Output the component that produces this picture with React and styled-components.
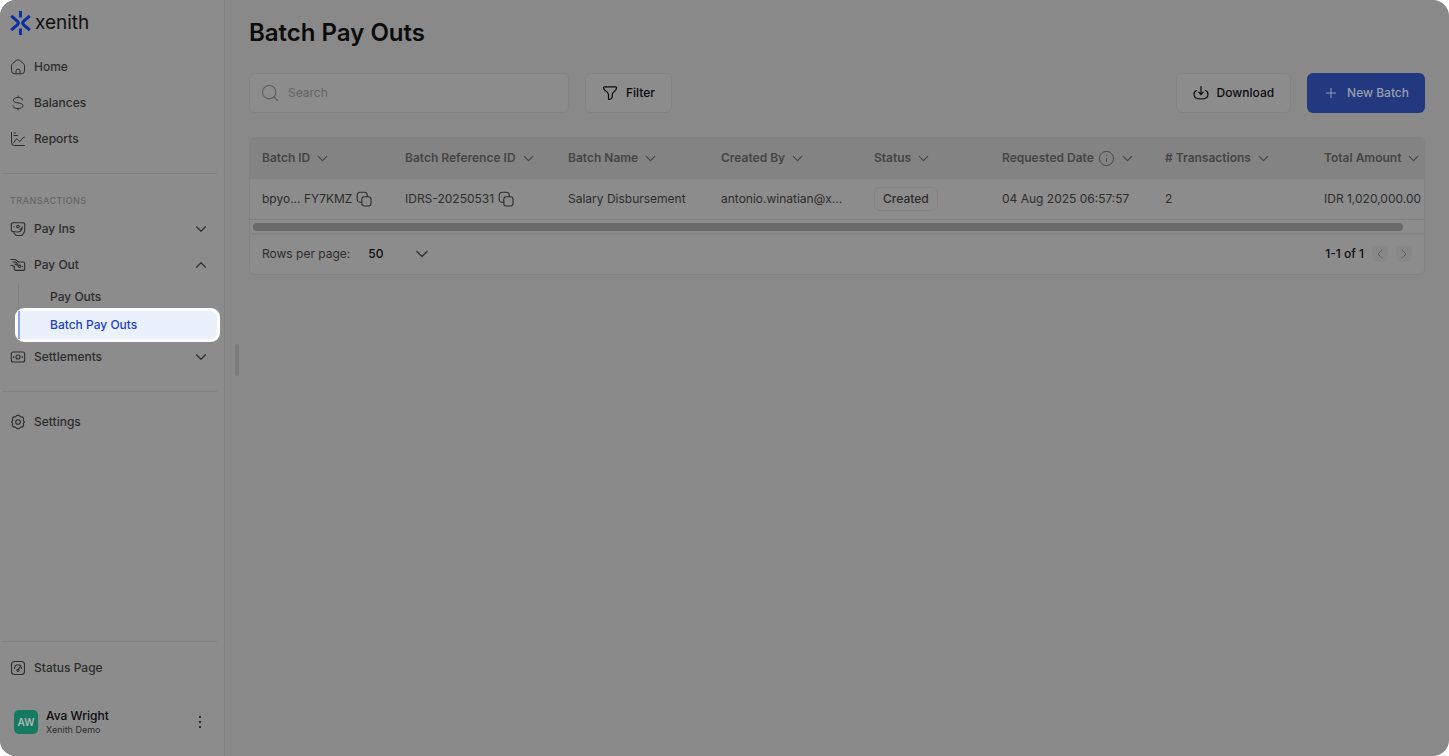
import React from "react"
import styled, { createGlobalStyle, ThemeProvider } from "styled-components"
import { ChevronDown, ChevronUp, ChevronLeft, ChevronRight, Search, Info, Plus } from "lucide-react"

const theme = {
  color: {
    surface: "#8c8c8c",
    page: "#898989",
    header: "#838383",
    border: "#838383",
    line: "#808080",
    text: "#2d2d2d",
    strong: "#0b0b0c",
    muted: "#454545",
    faint: "#666666",
    primary: "#22387f",
    active: "#1d3fc4",
  },
}

const GlobalStyle = createGlobalStyle`
  *, *::before, *::after {
    box-sizing: border-box;
  }
  body {
    margin: 0;
    background: #ffffff;
    font-family: Inter, "Liberation Sans", sans-serif;
    font-size: 12px;
    line-height: 20px;
    color: ${theme.color.text};
  }
  button, input, select {
    font: inherit;
    color: inherit;
  }
  a {
    color: inherit;
    text-decoration: none;
  }
  ul {
    margin: 0;
    padding: 0;
    list-style: none;
  }
`

const Shell = styled.div`
  display: flex;
  min-height: 100vh;
  border-radius: 16px;
  overflow: hidden;
  background: ${props => props.theme.color.page};
`

const Sidebar = styled.aside`
  display: flex;
  flex-direction: column;
  flex: 0 0 225px;
  padding: 9px 7px 20px 2px;
  border-right: 1px solid ${props => props.theme.color.line};
  background: ${props => props.theme.color.surface};
`

const Brand = styled.a`
  display: flex;
  align-items: center;
  gap: 4px;
  height: 28px;
  margin-bottom: 12px;
  padding-left: 8px;
  color: #111111;
  font-size: 19px;
`

const NavLink = styled.a`
  display: flex;
  align-items: center;
  gap: 8px;
  height: 36px;
  padding: 0 8px;
  font-weight: 500;
`

const NavToggle = styled.button`
  display: flex;
  align-items: center;
  gap: 8px;
  width: 100%;
  height: 36px;
  padding: 0 7px 0 8px;
  border: 0;
  background: none;
  font-weight: 500;
  text-align: left;
  cursor: pointer;

  & > span {
    flex: 1;
  }
`

const Divider = styled.hr`
  width: 100%;
  margin: ${props => props.$space || "16px 0"};
  border: 0;
  border-top: 1px solid ${props => props.theme.color.line};
`

const GroupTitle = styled.h2`
  margin: 0;
  padding: 1px 0 0 8px;
  color: ${props => props.theme.color.faint};
  font-size: 9px;
  font-weight: 500;
  letter-spacing: 0.05em;
`

const SubList = styled.ul`
  margin-left: 16px;
  border-left: 1px solid ${props => props.theme.color.line};
`

const SubItem = styled.li`
  margin-left: -1px;
  border-radius: ${props => (props.$active ? "6px" : "0")};
  background: ${props => (props.$active ? "#ffffff" : "none")};
  box-shadow: ${props => (props.$active ? "0 0 0 3px #ffffff" : "none")};
`

const SubLink = styled.a`
  display: flex;
  align-items: center;
  height: 28px;
  padding-left: ${props => (props.$active ? "30px" : "32px")};
  border-left: ${props => (props.$active ? "2px solid #8aa5f5" : "0")};
  border-radius: 0 6px 6px 0;
  background: ${props => (props.$active ? "#ebf0fd" : "none")};
  color: ${props => (props.$active ? props.theme.color.active : props.theme.color.text)};
  font-weight: 500;
`

const SidebarFooter = styled.div`
  margin-top: auto;
`

const Account = styled.div`
  display: flex;
  align-items: center;
  gap: 8px;
  margin-top: 22px;
  padding: 0 9px 0 12px;
`

const Avatar = styled.span`
  display: grid;
  place-items: center;
  width: 24px;
  height: 24px;
  border-radius: 5px;
  background: #147a62;
  color: #b5b5b5;
  font-size: 10px;
  font-weight: 600;
`

const AccountText = styled.div`
  flex: 1;
  color: ${props => props.theme.color.strong};
  font-weight: 500;
  line-height: 16px;

  & > small {
    display: block;
    color: ${props => props.theme.color.text};
    font-size: 9px;
    font-weight: 400;
    line-height: 12px;
  }
`

const IconButton = styled.button`
  display: grid;
  place-items: center;
  width: 16px;
  height: 16px;
  padding: 0;
  border: 0;
  border-radius: 5px;
  background: ${props => props.$fill || "none"};
  color: ${props => props.$color || "inherit"};
  cursor: pointer;
`

const Resizer = styled.div`
  align-self: center;
  flex: 0 0 4px;
  height: 32px;
  margin: 0 10px 36px;
  border-radius: 2px;
  background: #7c7c7c;
`

const Main = styled.main`
  flex: 1;
  min-width: 0;
  padding: 17px 24px 24px 0;
`

const Title = styled.h1`
  margin: 0 0 24px;
  color: ${props => props.theme.color.strong};
  font-size: 24px;
  font-weight: 600;
  line-height: 32px;
`

const Toolbar = styled.div`
  display: flex;
  gap: 16px;
  margin-bottom: 24px;
`

const SearchBox = styled.label`
  display: flex;
  align-items: center;
  gap: 8px;
  width: 320px;
  height: 40px;
  padding: 0 10px;
  border: 1px solid ${props => props.theme.color.border};
  border-radius: 6px;
  background: ${props => props.theme.color.surface};
  color: #5c5c5c;
`

const SearchInput = styled.input`
  flex: 1;
  min-width: 0;
  padding: 0;
  border: 0;
  outline: 0;
  background: none;

  &::placeholder {
    color: #646464;
    opacity: 1;
  }
`

const Button = styled.button`
  display: flex;
  align-items: center;
  justify-content: center;
  gap: 8px;
  height: 40px;
  padding: 0 16px;
  border: ${props => (props.$primary ? "0" : `1px solid ${props.theme.color.border}`)};
  border-radius: 6px;
  background: ${props => (props.$primary ? props.theme.color.primary : props.theme.color.surface)};
  color: ${props => (props.$primary ? "#989eae" : props.theme.color.strong)};
  font-weight: 500;
  cursor: pointer;
`

const Spacer = styled.div`
  flex: 1;
`

const Card = styled.section`
  border: 1px solid ${props => props.theme.color.border};
  border-radius: 6px;
  overflow: hidden;
  background: ${props => props.theme.color.surface};
`

const TableScroll = styled.div`
  overflow: hidden;
`

const Table = styled.table`
  width: 100%;
  min-width: 1192px;
  border-collapse: collapse;
  table-layout: fixed;
`

const HeadCell = styled.th`
  width: ${props => props.$width};
  height: 41px;
  padding: 0 0 1px 12px;
  background: ${props => props.theme.color.header};
  color: ${props => props.theme.color.muted};
  font-weight: 600;
  text-align: left;
  white-space: nowrap;
`

const Cell = styled.td`
  height: 40px;
  padding: 0 0 0 12px;
  border-bottom: 1px solid ${props => props.theme.color.line};
  white-space: nowrap;
`

const Inline = styled.span`
  display: flex;
  align-items: center;
  gap: 4px;
`

const Badge = styled.span`
  display: inline-block;
  padding: 1px 8px;
  border: 1px solid ${props => props.theme.color.border};
  border-radius: 6px;
  font-weight: 500;
`

const ScrollTrack = styled.div`
  padding: 3px 3px 2px;
  border-bottom: 2px solid ${props => props.theme.color.border};
`

const ScrollThumb = styled.div`
  width: 98.5%;
  height: 8px;
  border-radius: 4px;
  background: #696969;
`

const Pager = styled.footer`
  display: flex;
  align-items: center;
  gap: 8px;
  height: 39px;
  padding: 0 12px;

  & > output {
    margin-left: auto;
    color: ${props => props.theme.color.strong};
    font-weight: 500;
  }
`

const RowsLabel = styled.label`
  display: flex;
  align-items: center;
  gap: 18px;
`

const RowsField = styled.span`
  display: grid;
  align-items: center;
  width: 64px;

  & > * {
    grid-area: 1 / 1;
  }

  & > svg {
    justify-self: end;
    pointer-events: none;
  }
`

const RowsSelect = styled.select`
  width: 100%;
  padding: 0;
  border: 0;
  outline: 0;
  appearance: none;
  background: none;
  color: ${props => props.theme.color.strong};
  font-weight: 500;
`

const Glyph = ({ children, size = 16, width = 1 }) => (
  <svg
    width={size}
    height={size}
    viewBox="0 0 16 16"
    fill="none"
    stroke="currentColor"
    strokeWidth={width}
    strokeLinecap="round"
    strokeLinejoin="round"
    aria-hidden="true"
  >
    {children}
  </svg>
)

const Logo = () => (
  <svg width="21" height="24" viewBox="0 0 21 24" fill="none" stroke="#0a2f9e" strokeWidth="3" aria-hidden="true">
    <path d="M10.500 0v6.500M10.500 17.500V24" />
    <path d="M1.200 4.800L7.300 10q2 2 0 4L1.200 19.200" />
    <path d="M19.800 4.800L13.700 10q-2 2 0 4l6.100 5.200" />
  </svg>
)

const HomeIcon = () => (
  <Glyph>
    <path d="M1.500 6.800c0-1 .4-1.800 1.200-2.400l3.700-3c1-.7 2.200-.7 3.200 0l3.700 3c.8.600 1.200 1.400 1.200 2.400v5a3 3 0 0 1-3 3h-7a3 3 0 0 1-3-3z" />
    <path d="M6 14.500v-2.500a2 2 0 0 1 4 0v2.500" />
  </Glyph>
)

const DollarIcon = () => (
  <Glyph>
    <path d="M12.500 5C12.500 3.300 11 2.500 8 2.500S3.500 3.600 3.500 5.200C3.500 7 5 7.500 8 7.900s5 1.100 5 2.900c0 1.700-1.800 2.700-5 2.700s-5-1-5-2.700M8 1v1.500M8 13.500V15" />
  </Glyph>
)

const ReportsIcon = () => (
  <Glyph>
    <path d="M1.500 1.500v10a3 3 0 0 0 3 3h10M4 2h1.500M4 4.500h3.500M3.500 12c1.200 0 1.500-4 3.200-4s1.700 2.300 3.200 2.300S12 6 14.500 6" />
  </Glyph>
)

const PayInsIcon = () => (
  <Glyph width={1.1}>
    <path d="M3.500 10.500H2.800a1.500 1.500 0 0 1-1.500-1.500V3.300a1.500 1.500 0 0 1 1.500-1.500h10.400a1.500 1.500 0 0 1 1.500 1.500V9c0 2-.7 3-1.700 4.200-.6.700-1 1.300-2 1.300H7c-1.600 0-2-.8-2.600-1.800L4 12c-.4-.8.300-1.500 1.300-1.300l3 .3c1.700 0 2.500-.7 3-2l1-3" />
    <circle cx="8" cy="5.500" r="1.300" />
    <path d="M10 8.500l1.500-1M4 5.500v.2" />
  </Glyph>
)

const PayOutIcon = () => (
  <Glyph width={1.1}>
    <path d="M1 2.500h3.500c.8 0 1.200.2 1.800.7L8.500 5M1 8.500h1.500L4.300 9.500M3 5h2.500l2 1.800c.7.600 0 1.500-.8 1.200L4.800 7" />
    <path d="M8.500 5H13a1.700 1.700 0 0 1 1.700 1.700v5a1.700 1.700 0 0 1-1.700 1.700H6a1.700 1.700 0 0 1-1.700-1.700V9.500" />
    <circle cx="9.500" cy="9.300" r="1.200" />
    <path d="M12.300 9.300v.1" />
  </Glyph>
)

const SettlementsIcon = () => (
  <Glyph width={1.1}>
    <rect x="1.300" y="3" width="13.400" height="10" rx="2" />
    <circle cx="8" cy="8" r="2" />
    <path d="M3.800 7.500v1M12.200 7.500v1" />
  </Glyph>
)

const SettingsIcon = () => (
  <Glyph width={1.1}>
    <path d="M6 2.300C6.800.9 9.200.9 10 2.300c.3.500.8.700 1.300.6 1.700-.2 2.900 1.700 2.100 3.200-.2.400-.1.800.2 1.100 1.200.4 1.200 1.200 0 1.600-.3.300-.4.700-.2 1.100.8 1.500-.4 3.400-2.100 3.200-.5-.1-1 .1-1.300.6-.8 1.400-3.200 1.400-4 0-.3-.5-.8-.7-1.300-.6-1.700.2-2.900-1.700-2.100-3.200.2-.4.100-.8-.2-1.100-1.200-.4-1.200-1.200 0-1.600.3-.3.400-.7.200-1.100-.8-1.500.4-3.400 2.100-3.200.5.100 1-.1 1.300-.6z" />
    <circle cx="8" cy="8" r="2.300" />
  </Glyph>
)

const StatusIcon = () => (
  <Glyph width={1.1}>
    <rect x="1.500" y="1.500" width="13" height="13" rx="3" />
    <path d="M4.500 8.500C4.500 6 6 4.700 8 4.700c.7 0 1.400.2 2 .5M11.500 7.200v1.300M8.300 9.300l2.700-3.600" />
    <circle cx="8" cy="10.300" r="1.100" />
  </Glyph>
)

const FilterIcon = () => (
  <Glyph width={1.2}>
    <path d="M2.300 1.800h11.400c.5 0 .8.400.8.900 0 1.500-.7 2.600-2 3.500-1.600 1.100-2.300 1.800-2.300 3.500v2.100c0 .7-.3 1.200-.9 1.600l-1.700 1c-.6.300-1.100 0-1.100-.7V9.700c0-1.700-.8-2.400-2.300-3.500-1.500-1-2.700-2-2.700-3.500 0-.5.300-.9.800-.9z" />
  </Glyph>
)

const DownloadIcon = () => (
  <Glyph width={1.2}>
    <path d="M3.500 5.500C2.200 6 1 7.300 1 9.200 1 12.300 3.500 14 8 14s7-1.700 7-4.800c0-1.900-1.200-3.200-2.500-3.700M8 1.500V9M5.800 7.200L8 9.500l2.200-2.300" />
  </Glyph>
)

const CopyIcon = () => (
  <Glyph width={1.1}>
    <rect x="5.800" y="5.800" width="9.200" height="9.200" rx="2.400" />
    <path d="M5.800 11.200H4A2.800 2.800 0 0 1 1.200 8.400V4A2.800 2.800 0 0 1 4 1.200h4.400A2.800 2.800 0 0 1 11.200 4v1.800" />
  </Glyph>
)

const MoreIcon = () => (
  <Glyph width={2}>
    <path d="M8 3v.01M8 8v.01M8 13v.01" />
  </Glyph>
)

const columns = [
  { label: "Batch ID", width: "143px" },
  { label: "Batch Reference ID", width: "163px" },
  { label: "Batch Name", width: "153px" },
  { label: "Created By", width: "153px" },
  { label: "Status", width: "128px" },
  { label: "Requested Date", width: "163px", info: true },
  { label: "# Transactions", width: "159px" },
  { label: "Total Amount", width: "auto" },
]

const rows = [
  {
    id: "bpyo... FY7KMZ",
    reference: "IDRS-20250531",
    name: "Salary Disbursement",
    createdBy: "antonio.winatian@x...",
    status: "Created",
    requested: "04 Aug 2025 06:57:57",
    transactions: 2,
    total: "IDR 1,020,000.00",
  },
]

const CopyValue = ({ value }) => (
  <Inline>
    {value}
    <IconButton aria-label={`Copy ${value}`}>
      <CopyIcon />
    </IconButton>
  </Inline>
)

const SideNav = () => (
  <Sidebar>
    <Brand href="#">
      <Logo />
      xenith
    </Brand>
    <nav>
      <NavLink href="#home"><HomeIcon />Home</NavLink>
      <NavLink href="#balances"><DollarIcon />Balances</NavLink>
      <NavLink href="#reports"><ReportsIcon />Reports</NavLink>
      <Divider />
      <GroupTitle>TRANSACTIONS</GroupTitle>
      <NavToggle aria-expanded="false">
        <PayInsIcon />
        <span>Pay Ins</span>
        <ChevronDown size={18} strokeWidth={1.5} />
      </NavToggle>
      <NavToggle aria-expanded="true">
        <PayOutIcon />
        <span>Pay Out</span>
        <ChevronUp size={18} strokeWidth={1.5} />
      </NavToggle>
      <SubList>
        <SubItem><SubLink href="#pay-outs">Pay Outs</SubLink></SubItem>
        <SubItem $active><SubLink $active href="#batch-pay-outs" aria-current="page">Batch Pay Outs</SubLink></SubItem>
      </SubList>
      <NavToggle aria-expanded="false">
        <SettlementsIcon />
        <span>Settlements</span>
        <ChevronDown size={18} strokeWidth={1.5} />
      </NavToggle>
      <Divider $space="16px 0 12px" />
      <NavLink href="#settings"><SettingsIcon />Settings</NavLink>
    </nav>
    <SidebarFooter>
      <Divider $space="0 0 8px" />
      <NavLink href="#status"><StatusIcon />Status Page</NavLink>
      <Account>
        <Avatar>AW</Avatar>
        <AccountText>
          Ava Wright
          <small>Xenith Demo</small>
        </AccountText>
        <IconButton aria-label="Account menu" $color={theme.color.strong}><MoreIcon /></IconButton>
      </Account>
    </SidebarFooter>
  </Sidebar>
)

const BatchTable = () => (
  <Card>
    <TableScroll>
      <Table>
        <thead>
          <tr>
            {columns.map(column => (
              <HeadCell key={column.label} $width={column.width}>
                <Inline>
                  {column.label}
                  {column.info && <Info size={17} strokeWidth={1.3} />}
                  <ChevronDown size={17} strokeWidth={1.5} />
                </Inline>
              </HeadCell>
            ))}
          </tr>
        </thead>
        <tbody>
          {rows.map(row => (
            <tr key={row.id}>
              <Cell><CopyValue value={row.id} /></Cell>
              <Cell><CopyValue value={row.reference} /></Cell>
              <Cell>{row.name}</Cell>
              <Cell>{row.createdBy}</Cell>
              <Cell><Badge>{row.status}</Badge></Cell>
              <Cell>{row.requested}</Cell>
              <Cell>{row.transactions}</Cell>
              <Cell>{row.total}</Cell>
            </tr>
          ))}
        </tbody>
      </Table>
    </TableScroll>
    <ScrollTrack>
      <ScrollThumb />
    </ScrollTrack>
    <Pager>
      <RowsLabel>
        Rows per page:
        <RowsField>
          <RowsSelect defaultValue="50">
            <option>10</option>
            <option>50</option>
            <option>100</option>
          </RowsSelect>
          <ChevronDown size={20} strokeWidth={1.5} />
        </RowsField>
      </RowsLabel>
      <output>1-1 of 1</output>
      <IconButton aria-label="Previous page" $fill="#878787" $color="#5c5c5c"><ChevronLeft size={16} strokeWidth={1.5} /></IconButton>
      <IconButton aria-label="Next page" $fill="#878787" $color="#5c5c5c"><ChevronRight size={16} strokeWidth={1.5} /></IconButton>
    </Pager>
  </Card>
)

const App = () => (
  <ThemeProvider theme={theme}>
    <GlobalStyle />
    <Shell>
      <SideNav />
      <Resizer />
      <Main>
        <Title>Batch Pay Outs</Title>
        <Toolbar>
          <SearchBox>
            <Search size={20} strokeWidth={1.3} />
            <SearchInput type="search" placeholder="Search" aria-label="Search" />
          </SearchBox>
          <Button><FilterIcon />Filter</Button>
          <Spacer />
          <Button><DownloadIcon />Download</Button>
          <Button $primary><Plus size={16} strokeWidth={1.5} />New Batch</Button>
        </Toolbar>
        <BatchTable />
      </Main>
    </Shell>
  </ThemeProvider>
)

export default App
